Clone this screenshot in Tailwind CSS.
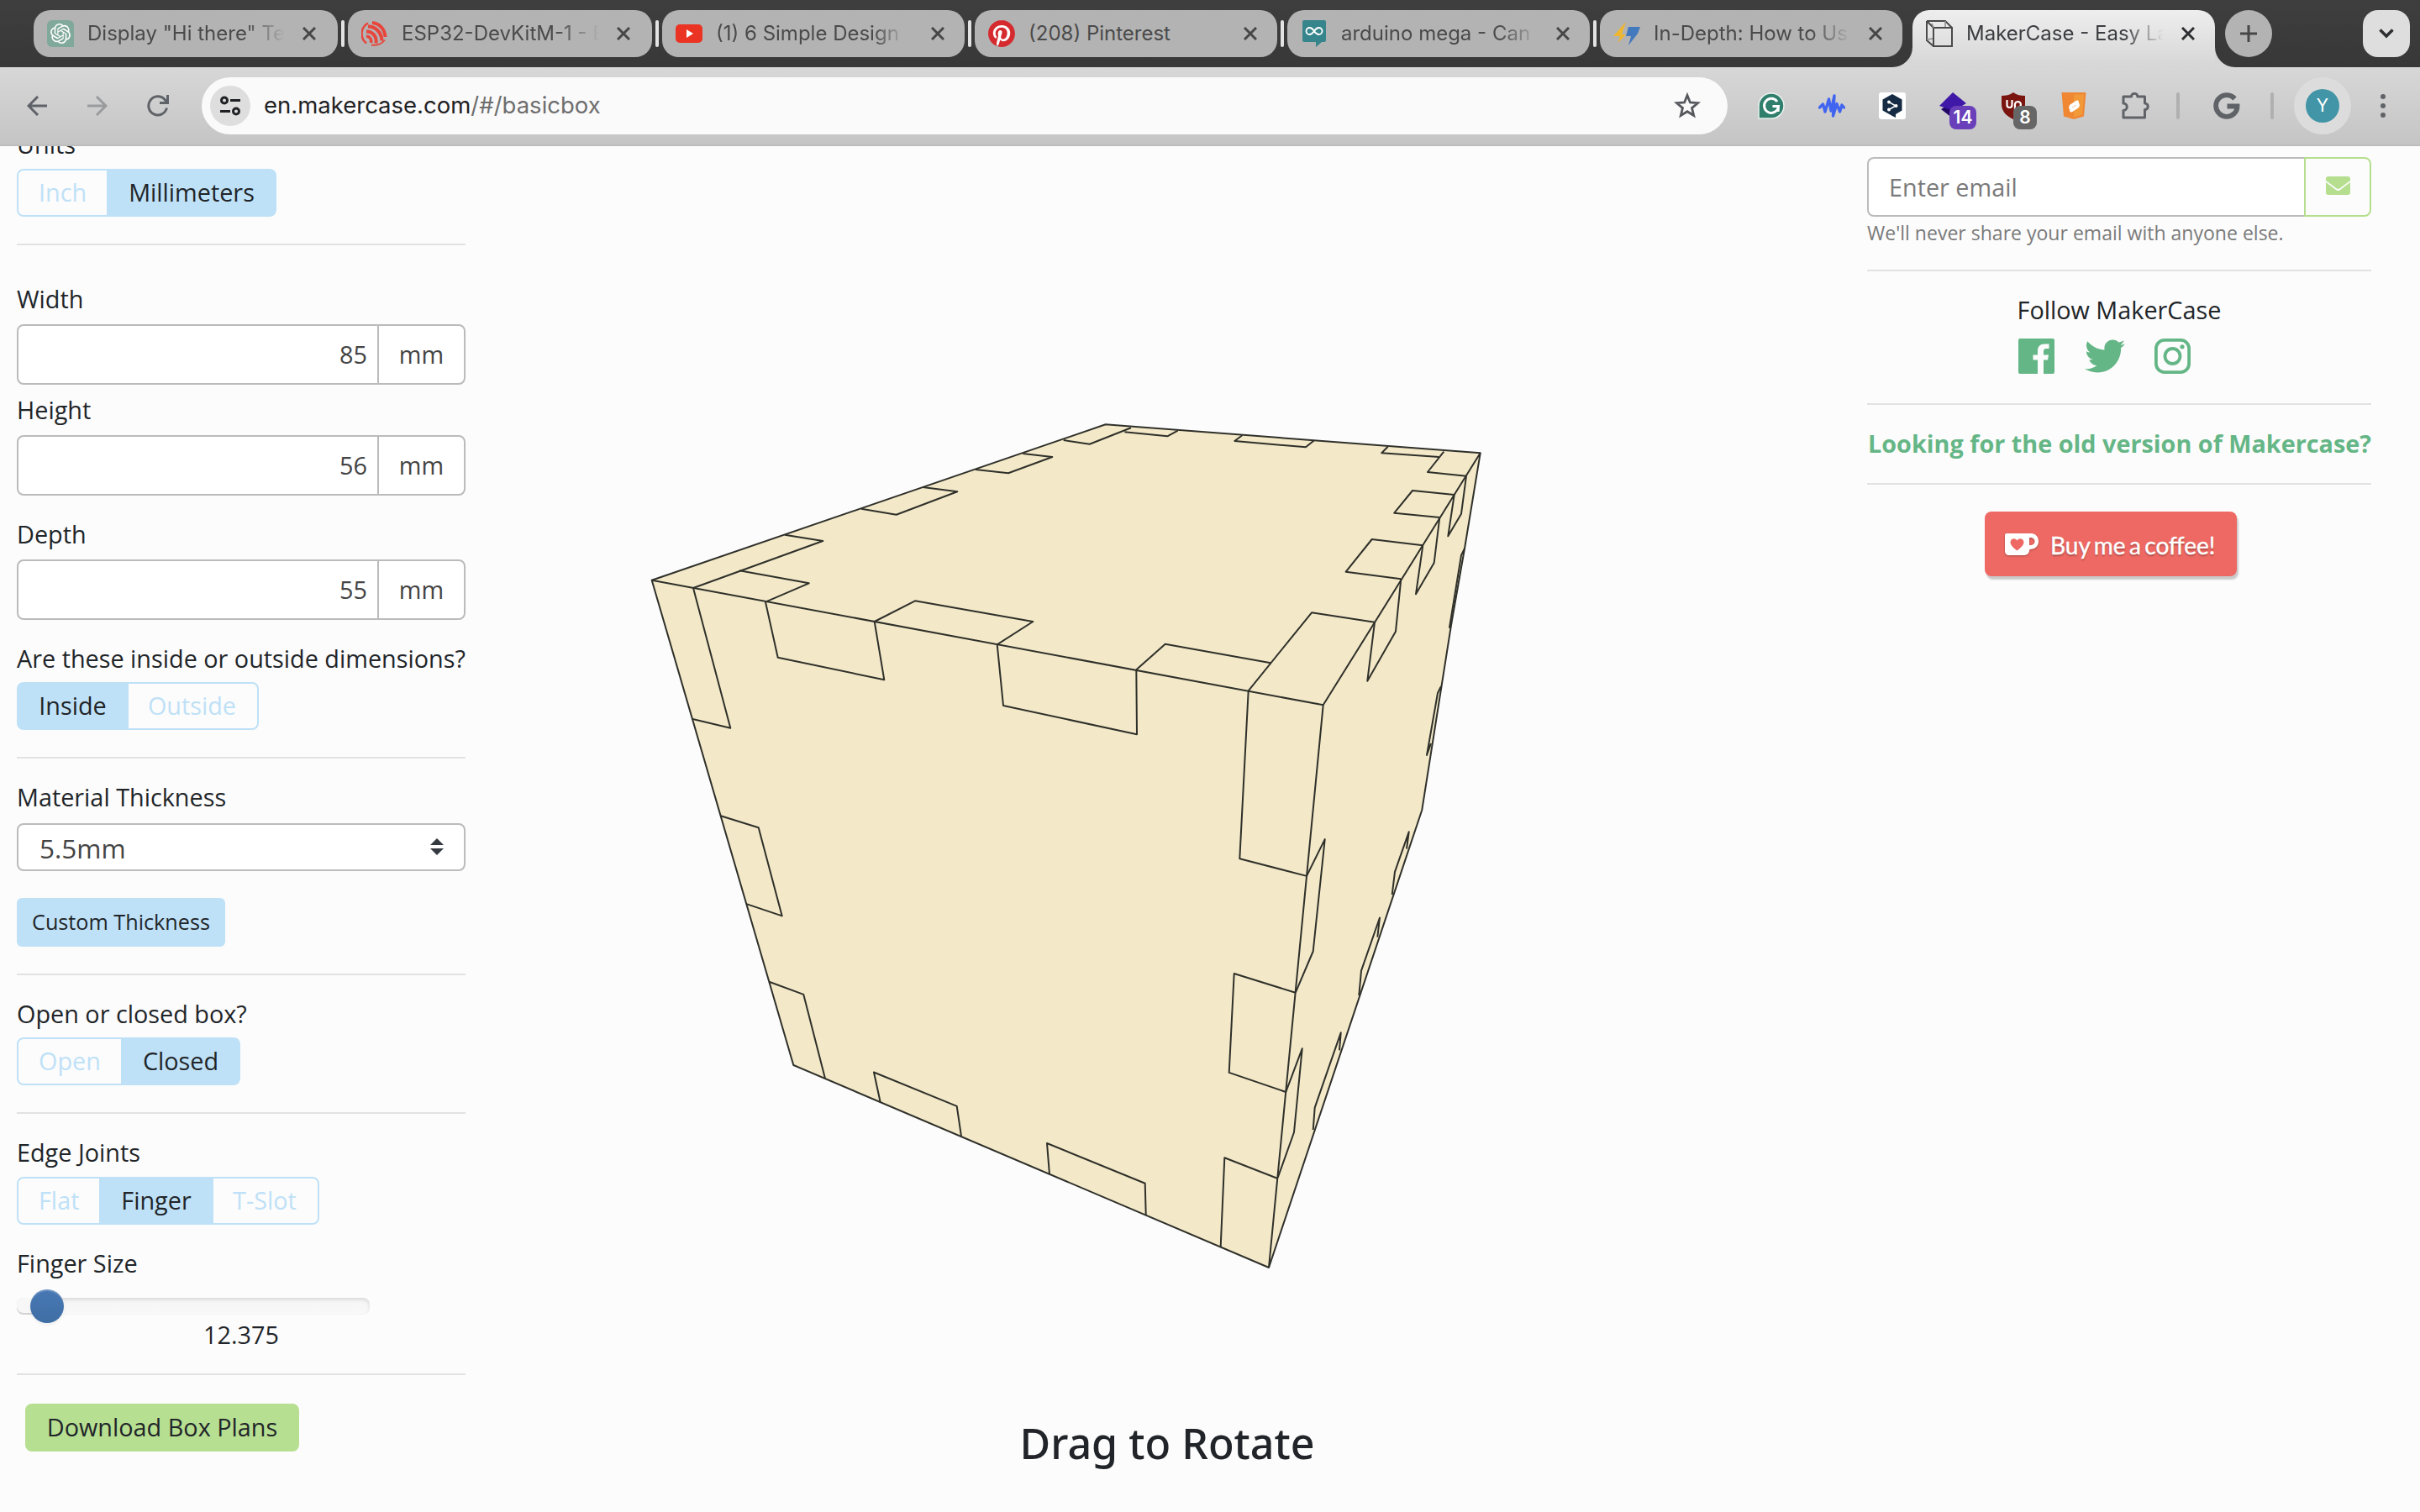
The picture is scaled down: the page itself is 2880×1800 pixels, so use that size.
<!DOCTYPE html>
<html lang="en">
<head>
<meta charset="utf-8">
<title>MakerCase - Easy Laser Cut Case Design</title>
<script src="https://cdn.jsdelivr.net/npm/@tailwindcss/browser@4"></script>
</head>
<body class="w-[2880px] h-[1800px] overflow-hidden bg-[#fcfcfc] flex flex-col font-['Open_Sans','Noto_Sans',sans-serif] text-[28.8px] text-[#212529]">

<!-- Tab strip -->
<header class="h-20 shrink-0 bg-linear-to-b from-[#3e3e3e] to-[#383838] pl-10 pr-3 pt-3 flex items-start font-['Inter',sans-serif] text-[24px] text-[#4a4a4a]">
  <div class="flex h-14 w-[362px] items-center rounded-[20px] bg-[#b3b3b3] pl-4">
    <svg class="size-8 shrink-0" viewBox="0 0 32 32"><path d="M6 0H26a6 6 0 0 1 6 6V32H6a6 6 0 0 1-6-6V6a6 6 0 0 1 6-6z" fill="#80a99c"/><path transform="translate(4 4)" fill="#fff" d="M22.2819 9.8211a5.9847 5.9847 0 0 0-.5157-4.9108 6.0462 6.0462 0 0 0-6.5098-2.9A6.0651 6.0651 0 0 0 4.9807 4.1818a5.9847 5.9847 0 0 0-3.9977 2.9 6.0462 6.0462 0 0 0 .7427 7.0966 5.98 5.98 0 0 0 .511 4.9107 6.051 6.051 0 0 0 6.5146 2.9001A5.9847 5.9847 0 0 0 13.2599 24a6.0557 6.0557 0 0 0 5.7718-4.2058 5.9894 5.9894 0 0 0 3.9977-2.9001 6.0557 6.0557 0 0 0-.7475-7.0729zm-9.022 12.6081a4.4755 4.4755 0 0 1-2.8764-1.0408l.1419-.0804 4.7783-2.7582a.7948.7948 0 0 0 .3927-.6813v-6.7369l2.02 1.1686a.071.071 0 0 1 .038.052v5.5826a4.504 4.504 0 0 1-4.4945 4.4944zm-9.6607-4.1254a4.4708 4.4708 0 0 1-.5346-3.0137l.142.0852 4.783 2.7582a.7712.7712 0 0 0 .7806 0l5.8428-3.3685v2.3324a.0804.0804 0 0 1-.0332.0615L9.74 19.9502a4.4992 4.4992 0 0 1-6.1408-1.6464zM2.3408 7.8956a4.485 4.485 0 0 1 2.3655-1.9728V11.6a.7664.7664 0 0 0 .3879.6765l5.8144 3.3543-2.0201 1.1685a.0757.0757 0 0 1-.071 0l-4.8303-2.7865A4.504 4.504 0 0 1 2.3408 7.872zm16.5963 3.8558L13.1038 8.364 15.1192 7.2a.0757.0757 0 0 1 .071 0l4.8303 2.7913a4.4944 4.4944 0 0 1-.6765 8.1042v-5.6772a.79.79 0 0 0-.407-.667zm2.0107-3.0231l-.142-.0852-4.7735-2.7818a.7759.7759 0 0 0-.7854 0L9.409 9.2297V6.8974a.0662.0662 0 0 1 .0284-.0615l4.8303-2.7866a4.4992 4.4992 0 0 1 6.6802 4.66zM8.3065 12.863l-2.02-1.1638a.0804.0804 0 0 1-.038-.0567V6.0742a4.4992 4.4992 0 0 1 7.3757-3.4537l-.142.0805L8.704 5.459a.7948.7948 0 0 0-.3927.6813zm1.0976-2.3654l2.602-1.4998 2.6069 1.4998v2.9994l-2.5974 1.4997-2.6067-1.4997Z"/></svg>
    <span class="ml-4 w-[240px] overflow-hidden whitespace-nowrap [mask-image:linear-gradient(to_right,black_78%,transparent_98%)]">Display "Hi there" Te</span>
    <svg class="ml-4 size-4 shrink-0" viewBox="0 0 16 16" stroke="#474747" stroke-width="3"><path d="M1 1L15 15M15 1L1 15"/></svg>
  </div>
  <div class="mx-1 mt-3 h-8 w-1 rounded-full bg-[#e3e3e3]"></div>
  <div class="flex h-14 w-[362px] items-center rounded-[20px] bg-[#b3b3b3] pl-4">
    <svg class="size-8 shrink-0" viewBox="0 0 32 32" fill="none" stroke="#e8453c"><path d="M8 3.500A14.500 14.500 0 0 0 6 27.500" stroke-width="2.500"/><path d="M13 3c9 1 15 8 15.500 17" stroke-width="4"/><path d="M8 7.500c9 0 16 7 16.500 17" stroke-width="4"/><path d="M6 13.500c8 0 12.500 6 11.500 14" stroke-width="4"/><path d="M6 19c4 .5 6.500 3.500 5.500 8" stroke-width="3.500"/><path d="M12 29.500c7 1 12-1 16-6" stroke-width="2"/></svg>
    <span class="ml-4 w-[240px] overflow-hidden whitespace-nowrap [mask-image:linear-gradient(to_right,black_78%,transparent_98%)]">ESP32-DevKitM-1 - E</span>
    <svg class="ml-4 size-4 shrink-0" viewBox="0 0 16 16" stroke="#474747" stroke-width="3"><path d="M1 1L15 15M15 1L1 15"/></svg>
  </div>
  <div class="mx-1 mt-3 h-8 w-1 rounded-full bg-[#e3e3e3]"></div>
  <div class="flex h-14 w-[360px] items-center rounded-[20px] bg-[#b3b3b3] pl-4">
    <svg class="size-8 shrink-0" viewBox="0 0 32 32"><rect y="5" width="32" height="22" rx="5" fill="#ea3323"/><path d="M13 11l8 5-8 5z" fill="#fff"/></svg>
    <span class="ml-4 w-[240px] overflow-hidden whitespace-nowrap [mask-image:linear-gradient(to_right,black_78%,transparent_94%)]">(1) 6 Simple Design T</span>
    <svg class="ml-4 size-4 shrink-0" viewBox="0 0 16 16" stroke="#474747" stroke-width="3"><path d="M1 1L15 15M15 1L1 15"/></svg>
  </div>
  <div class="mx-1 mt-3 h-8 w-1 rounded-full bg-[#e3e3e3]"></div>
  <div class="flex h-14 w-[360px] items-center rounded-[20px] bg-[#b3b3b3] pl-4">
    <svg class="size-8 shrink-0" viewBox="0 0 24 24"><circle cx="12" cy="12" r="11" fill="#fff"/><path fill="#d52b2f" d="M12.017 0C5.396 0 .029 5.367.029 11.987c0 5.079 3.158 9.417 7.618 11.162-.105-.949-.199-2.403.041-3.439.219-.937 1.406-5.957 1.406-5.957s-.359-.72-.359-1.781c0-1.663.967-2.911 2.168-2.911 1.024 0 1.518.769 1.518 1.688 0 1.029-.653 2.567-.992 3.992-.285 1.193.6 2.165 1.775 2.165 2.128 0 3.768-2.245 3.768-5.487 0-2.861-2.063-4.869-5.008-4.869-3.41 0-5.409 2.562-5.409 5.199 0 1.033.394 2.143.889 2.741.099.12.112.225.085.345-.09.375-.293 1.199-.334 1.363-.053.225-.172.271-.401.165-1.495-.69-2.433-2.878-2.433-4.646 0-3.776 2.748-7.252 7.92-7.252 4.158 0 7.392 2.967 7.392 6.923 0 4.135-2.607 7.462-6.233 7.462-1.214 0-2.354-.629-2.758-1.379l-.749 2.848c-.269 1.045-1.004 2.352-1.498 3.146 1.123.345 2.306.535 3.55.535 6.607 0 11.985-5.365 11.985-11.987C23.97 5.39 18.592.026 11.985.026L12.017 0z"/></svg>
    <span class="ml-4 w-[240px] overflow-hidden whitespace-nowrap">(208) Pinterest</span>
    <svg class="ml-4 size-4 shrink-0" viewBox="0 0 16 16" stroke="#474747" stroke-width="3"><path d="M1 1L15 15M15 1L1 15"/></svg>
  </div>
  <div class="mx-1 mt-3 h-8 w-1 rounded-full bg-[#e3e3e3]"></div>
  <div class="flex h-14 w-[360px] items-center rounded-[20px] bg-[#b3b3b3] pl-4">
    <svg class="size-8 shrink-0" viewBox="0 0 32 32"><path d="M4 0H28a2 2 0 0 1 2 2V24a2 2 0 0 1-2 2H25L18 32V26H4a2 2 0 0 1-2-2V2a2 2 0 0 1 2-2z" fill="#36858c"/><path d="M16 13c-2-3-3.500-4-5.500-4a4 4 0 0 0 0 8c2 0 3.500-1 5.500-4s3.500-4 5.500-4a4 4 0 0 1 0 8c-2 0-3.500-1-5.500-4z" fill="none" stroke="#fff" stroke-width="1.800"/></svg>
    <span class="ml-4 w-[240px] overflow-hidden whitespace-nowrap [mask-image:linear-gradient(to_right,black_78%,transparent_98%)]">arduino mega - Can</span>
    <svg class="ml-4 size-4 shrink-0" viewBox="0 0 16 16" stroke="#474747" stroke-width="3"><path d="M1 1L15 15M15 1L1 15"/></svg>
  </div>
  <div class="mx-1 mt-3 h-8 w-1 rounded-full bg-[#e3e3e3]"></div>
  <div class="flex h-14 w-[360px] items-center rounded-[20px] bg-[#b3b3b3] pl-4">
    <svg class="size-8 shrink-0" viewBox="0 0 32 32"><path d="M15 2L0 19H8L5.500 27 15 17H10z" fill="#efb62f"/><path d="M18 8H32L29 16 18 30 21 19H15z" fill="#4379bd"/></svg>
    <span class="ml-4 w-[240px] overflow-hidden whitespace-nowrap [mask-image:linear-gradient(to_right,black_78%,transparent_98%)]">In-Depth: How to Us</span>
    <svg class="ml-4 size-4 shrink-0" viewBox="0 0 16 16" stroke="#474747" stroke-width="3"><path d="M1 1L15 15M15 1L1 15"/></svg>
  </div>
  <!-- Active tab -->
  <svg class="-ml-3 mt-11 h-6 w-6 shrink-0" viewBox="0 0 24 24"><path d="M24 0A24 24 0 0 1 0 24H24z" fill="#d7d7d7"/></svg>
  <div class="flex h-[68px] w-[360px] items-center rounded-t-[20px] bg-linear-to-b from-[#eeeeee] to-[#d6d6d6] pb-3 pl-4 text-[#3c3d40]">
    <svg class="size-8 shrink-0" viewBox="0 0 32 32" fill="none" stroke="#4a4a4a" stroke-width="2"><path d="M9 9H31V31H9zM1 1H23L31 9M1 1V24L9 31M1 1L9 9"/><path d="M9 9L7 4M23 1V8M1 23L8 22" stroke="#8a8a8a" stroke-width="1.500"/></svg>
    <span class="ml-4 w-[240px] overflow-hidden whitespace-nowrap [mask-image:linear-gradient(to_right,black_78%,transparent_98%)]">MakerCase - Easy La</span>
    <svg class="ml-4 size-4 shrink-0" viewBox="0 0 16 16" stroke="#2e2f32" stroke-width="3"><path d="M1 1L15 15M15 1L1 15"/></svg>
  </div>
  <svg class="mt-11 h-6 w-6 shrink-0" viewBox="0 0 24 24"><path d="M0 0A24 24 0 0 0 24 24H0z" fill="#d7d7d7"/></svg>
  <div class="-ml-3 flex size-14 shrink-0 items-center justify-center rounded-full bg-[#b3b3b3]">
    <svg class="size-5" viewBox="0 0 20 20" stroke="#474747" stroke-width="3"><path d="M10 0V20M0 10H20"/></svg>
  </div>
  <div class="ml-auto flex size-14 shrink-0 items-center justify-center rounded-[18px] bg-[#dedede]">
    <svg class="h-3 w-[18px]" viewBox="0 0 18 12" fill="none" stroke="#2e2f32" stroke-width="3.500"><path d="M1.500 1.500L9 9L16.500 1.500"/></svg>
  </div>
</header>

<!-- Toolbar -->
<nav class="flex h-[94px] shrink-0 items-center border-b-2 border-[#bdbdbd] bg-linear-to-b from-[#d7d7d7] to-[#c5c5c5] pl-8 pr-10 font-['Inter',sans-serif]">
  <svg class="h-6 w-6" viewBox="0 0 24 24" fill="none" stroke="#5f6368" stroke-width="3"><path d="M24 12H2M13 1L2 12L13 23"/></svg>
  <svg class="ml-12 h-6 w-6" viewBox="0 0 24 24" fill="none" stroke="#999b9d" stroke-width="3"><path d="M0 12H22M11 1L22 12L11 23"/></svg>
  <svg class="ml-[47px] size-[26px]" viewBox="0 0 26 26" fill="none" stroke="#5f6368" stroke-width="3"><path d="M23.500 15.500A11 11 0 1 1 21 5.500L24 9M24.500 0V9.500H15"/></svg>
  <div class="ml-[39px] flex h-[68px] w-[1816px] items-center rounded-full bg-[#fafafa] pl-[10px] pr-8">
    <div class="flex size-12 items-center justify-center rounded-full bg-[#dedede]">
      <svg class="size-6" viewBox="0 0 24 24" fill="none" stroke="#1f2124" stroke-width="3"><circle cx="5" cy="5.500" r="3.500"/><path d="M12 5.500H24M0 18.500H12"/><circle cx="19" cy="18.500" r="3.500"/></svg>
    </div>
    <span class="ml-4 text-[27.5px] text-[#1f2124]">en.makercase.com<span class="text-[#6e6e6e]">/#/basicbox</span></span>
    <svg class="ml-auto size-8" viewBox="0 0 32 32" fill="none" stroke="#55585c" stroke-width="2.800"><path d="M16 3.500L19.400 12L28.500 12.700L21.500 18.600L23.700 27.500L16 22.700L8.300 27.500L10.500 18.600L3.500 12.700L12.600 12z"/></svg>
  </div>
  <!-- Extensions -->
  <svg class="ml-9 size-8" viewBox="0 0 32 32"><path d="M16 1A15 15 0 1 1 16 31H1V16A15 15 0 0 1 16 1z" fill="#2f7f6c" stroke="#e8efec" stroke-width="1.500"/><path d="M23 11A8.500 8.500 0 1 0 24.500 16.500H17.500M24.500 16.500L24 23" fill="none" stroke="#fff" stroke-width="3"/></svg>
  <svg class="ml-10 size-8" viewBox="0 0 32 32" fill="none" stroke="#4265f0" stroke-width="3.400" stroke-linejoin="round" stroke-linecap="round"><path d="M1.500 18L5.500 14L8 23L12.500 8L15 22L19 4L17.500 28L22 13.500L25.500 23L28 15L30.500 18"/></svg>
  <svg class="ml-10 size-8" viewBox="0 0 32 32"><rect width="32" height="32" rx="3" fill="#fff"/><path d="M16 2L27.500 8.500V21.500L20 26V30L16 28L4.500 21.500V8.500z" fill="#152b43"/><path d="M12 11.500L20 16L12 20.500" fill="none" stroke="#fff" stroke-width="1.500"/><g fill="#fff"><circle cx="12" cy="11.500" r="2"/><circle cx="20.500" cy="16" r="2"/><circle cx="12" cy="20.500" r="2"/></g></svg>
  <div class="relative ml-10 size-8">
    <svg class="size-8" viewBox="0 0 32 32"><path d="M2 20L12 14L28 22L16 31z" fill="#230768"/><path d="M16 0L32 13L17 22L0 16z" fill="#3f18a8"/></svg>
    <span class="absolute left-3 top-4 flex h-7 w-8 items-center justify-center rounded-lg bg-[#6a40ba] text-[21px] font-semibold text-white">14</span>
  </div>
  <div class="relative ml-10 size-8">
    <svg class="size-8" viewBox="0 0 32 32"><path d="M16 0C20 3 25 4 30 4V14C30 23 24 28 16 32C8 28 2 23 2 14V4C7 4 12 3 16 0z" fill="#79140f"/><path d="M8.500 9V15Q8.500 18 11.500 18T14.500 15V9M18 24V14A3.500 3.500 0 1 1 21 18" fill="none" stroke="#fff" stroke-width="2.200"/></svg>
    <span class="absolute left-4 top-4 flex size-7 items-center justify-center rounded-lg bg-[#666] text-[21px] font-semibold text-white">8</span>
  </div>
  <svg class="ml-10 size-8" viewBox="0 0 32 32"><path d="M1.500 0H30.500L28 28.500L16 32L4 28.500z" fill="#ef8733"/><path d="M16 2.500H28L26 26.500L16 29.500z" fill="#f29a3a"/><g fill="none" stroke="#fff" stroke-width="4" stroke-linecap="round"><path d="M20 11.500L12.500 16.500A2.500 2.500 0 0 0 12.500 19"/><path d="M20.500 14A2.500 2.500 0 0 1 20 17L13 21.500"/></g></svg>
  <svg class="ml-10 h-8 w-[34px]" viewBox="0 0 34 32" fill="none" stroke="#5f6368" stroke-width="3" stroke-linejoin="round"><path d="M3 5H12.500A3.700 3.700 0 0 1 19.900 5H28.500V13A3.700 3.700 0 0 1 28.500 20.500V30H3V21.500A4.200 4.200 0 0 0 3 13z"/></svg>
  <div class="ml-8 h-8 w-1 rounded-full bg-[#b0b0b0]"></div>
  <svg class="ml-10 size-8" viewBox="0 0 32 32" fill="none" stroke="#5f6368" stroke-width="5.800"><path d="M25.500 7.500A12.800 12.800 0 1 0 24.500 25.500Q28.500 22 28.500 16.500H16.500"/></svg>
  <div class="ml-9 h-8 w-1 rounded-full bg-[#b0b0b0]"></div>
  <div class="ml-6 flex size-[68px] items-center justify-center rounded-full bg-[#dcdcdc]">
    <span class="flex size-10 items-center justify-center rounded-full bg-[#4295a6] text-[21px] text-white">Y</span>
  </div>
  <svg class="ml-auto h-7 w-2" viewBox="0 0 8 28" fill="#5f6368"><circle cx="4" cy="3" r="3"/><circle cx="4" cy="14" r="3"/><circle cx="4" cy="25" r="3"/></svg>
</nav>

<main class="flex min-h-0 flex-1 overflow-hidden">
  <!-- Box parameters -->
  <aside class="flex w-[574px] shrink-0 flex-col items-start pl-5 pr-5 whitespace-nowrap">
    <label class="-mt-6 h-[43px] leading-[43px]">Units</label>
    <div class="mt-2 flex h-[57px] rounded-lg border-2 border-[#bfe1f7] leading-[52px]">
      <span class="w-[105px] pl-6 text-[#bfe1f7]">Inch</span>
      <span class="w-[200px] bg-[#bfe1f7] pl-[2px] text-center">Millimeters</span>
    </div>
    <hr class="mt-8 w-full border-t-2 border-[#e2e2e2]">

    <label class="mt-[42px] h-[43px] leading-[43px]">Width</label>
    <div class="mt-[9px] flex h-[72px] w-full rounded-lg border-2 border-[#bbb] bg-white leading-[68px] text-[#444]">
      <span class="w-[429px] border-r-2 border-[#bbb] pr-3 text-right">85</span>
      <span class="flex-1 text-center">mm</span>
    </div>
    <label class="mt-2 h-[43px] leading-[43px]">Height</label>
    <div class="mt-[9px] flex h-[72px] w-full rounded-lg border-2 border-[#bbb] bg-white leading-[68px] text-[#444]">
      <span class="w-[429px] border-r-2 border-[#bbb] pr-3 text-right">56</span>
      <span class="flex-1 text-center">mm</span>
    </div>
    <label class="mt-6 h-[43px] leading-[43px]">Depth</label>
    <div class="mt-[9px] flex h-[72px] w-full rounded-lg border-2 border-[#bbb] bg-white leading-[68px] text-[#444]">
      <span class="w-[429px] border-r-2 border-[#bbb] pr-3 text-right">55</span>
      <span class="flex-1 text-center">mm</span>
    </div>

    <label class="mt-6 h-[43px] leading-[43px]">Are these inside or outside dimensions?</label>
    <div class="mt-[7px] flex h-[57px] rounded-lg border-2 border-[#bfe1f7] leading-[52px]">
      <span class="w-[131px] bg-[#bfe1f7] pr-[2px] text-center">Inside</span>
      <span class="w-[153px] pr-[2px] text-center text-[#bfe1f7]">Outside</span>
    </div>
    <hr class="mt-8 w-full border-t-2 border-[#e2e2e2]">

    <label class="mt-6 h-[43px] leading-[43px]">Material Thickness</label>
    <div class="mt-[10px] flex h-[57px] w-full items-center justify-between rounded-lg border-2 border-[#bbb] bg-white pl-[25px] pr-6 text-[31.5px] text-[#444]">
      <span class="pt-[2px] leading-none">5.5mm</span>
      <svg class="mb-[2px] h-5 w-4" viewBox="0 0 16 20" fill="#343a40"><path d="M8 0L16 8H0zM8 20L0 12H16z"/></svg>
    </div>
    <div class="mt-8 h-[58px] w-[248px] rounded-md bg-[#bfe1f7] text-center text-[25.2px] leading-[57px]">Custom Thickness</div>
    <hr class="mt-8 w-full border-t-2 border-[#e2e2e2]">

    <label class="mt-6 h-[43px] leading-[43px]">Open or closed box?</label>
    <div class="mt-[7px] flex h-[57px] rounded-lg border-2 border-[#bfe1f7] leading-[52px]">
      <span class="w-[122px] pl-6 text-[#bfe1f7]">Open</span>
      <span class="w-[140px] bg-[#bfe1f7] pl-[2px] text-center">Closed</span>
    </div>
    <hr class="mt-8 w-full border-t-2 border-[#e2e2e2]">

    <label class="mt-6 h-[43px] leading-[43px]">Edge Joints</label>
    <div class="mt-2 flex h-[57px] rounded-lg border-2 border-[#bfe1f7] leading-[52px]">
      <span class="w-[96px] pl-6 text-[#bfe1f7]">Flat</span>
      <span class="w-[136px] bg-[#bfe1f7] text-center">Finger</span>
      <span class="w-[124px] pr-[2px] text-center text-[#bfe1f7]">T-Slot</span>
    </div>

    <label class="mt-6 h-[43px] leading-[43px]">Finger Size</label>
    <div class="relative mt-5 h-5 w-[420px] rounded-lg bg-linear-to-b from-[#f4f4f4] to-[#f9f9f9] shadow-[inset_0_2px_4px_rgba(0,0,0,0.12)]">
      <div class="h-5 w-9 rounded-l-lg bg-[#f7f7f7] shadow-[inset_0_-2px_0_rgba(0,0,0,0.15)]"></div>
      <div class="absolute -top-[10px] left-4 size-10 rounded-full bg-linear-to-b from-[#4878b4] to-[#3f6ea4] shadow-[inset_0_2px_0_rgba(255,255,255,0.2),0_2px_4px_rgba(0,0,0,0.06)]"></div>
    </div>
    <div class="mt-[2px] h-[43px] w-full text-center leading-[43px]">12.375</div>
    <hr class="mt-[25px] w-full border-t-2 border-[#e2e2e2]">
    <div class="ml-[10px] mt-[34px] h-[57px] w-[326px] rounded-lg bg-[#b7df92] text-center leading-[56px]">Download Box Plans</div>
  </aside>

  <!-- 3D preview -->
  <section class="flex w-[1630px] shrink-0 flex-col items-center">
    <svg class="h-[1500px] w-[1630px] shrink-0" viewBox="574 174 1630 1500" fill="none" stroke="#2f302a" stroke-width="2" stroke-linejoin="round">
      <path d="M775.700 690.700L1315.700 505.300L1761.700 539.300L1743 653L1727.500 741L1692.300 964.200L1510 1509L944.300 1268z" fill="#f3e9c9"/>
      <path d="M775.700 690.700L1574.700 839.300L1761.700 539.300M1574.700 839.300L1510 1509"/>
      <!-- top panel, left edge -->
      <path d="M934 636.700L979.300 644L825 700M1098.300 580L1139.300 585.300L1066.700 612.700L1025 605.700M1217.300 540L1252.300 544L1200 563.300L1161 559M1265.700 524L1296.700 528.700L1346 509.300"/>
      <!-- top panel, back edge -->
      <path d="M1338.300 514.300L1389.300 519.300L1401.700 512.700M1478.300 518.300L1469.300 525L1554 532.300L1564 524.300M1651.700 531.700L1644.300 539.300L1712.300 544"/>
      <!-- top panel, right edge -->
      <path d="M1718.300 537.700L1699 562L1745 566.700M1730.700 589L1681 584L1659.300 610.700L1713.300 616M1693.300 649.300L1632.700 642L1601.700 680.700L1667.300 689.300M1636 740.700L1561 729.300L1485.700 822.300"/>
      <!-- top panel, front edge -->
      <path d="M880 679.300L962.700 694.300L911 716.700M1040.700 740L1089 715.300L1229.300 740L1186.700 767.300M1512.300 789.300L1386.700 766.700L1352.300 797.300"/>
      <!-- front panel -->
      <path d="M825 700L869.300 866.700L823.300 855.700M911 716.700L925.700 782.700L1052.300 809.300L1040.700 740M1186.700 767.300L1194 840L1353 874.300L1352.300 797.300M857.700 971.300L902.700 985.200L930.700 1090.400L888.300 1076.100M915.300 1168.700L956.300 1183.900L982 1284M1047.700 1312.200L1040 1276.500L1138.700 1316.900L1144 1352.600M1249 1398.300L1246 1361L1362.700 1408.700L1363.700 1446M1452.700 1484L1457.300 1378.300L1520 1402.700M1485.700 822.300L1475.300 1022.300L1555 1042.900M1541.700 1181.800L1468.700 1159L1462.700 1276.900L1530.300 1300"/>
      <!-- right panel -->
      <path d="M1745 566.700L1739 611.700L1723.300 638.300L1730.700 589M1713.300 616L1706.700 670L1685 707.300L1693.300 649.300M1667.300 689.300L1661 751.700L1627.300 810.700L1636 740.700M1555 1042.900L1576.700 999.100L1562.700 1132.500L1541.700 1181.800M1530.300 1300L1549.700 1248.300L1540 1348L1520.700 1401.900"/>
      <path d="M1743 653L1739 661L1725 747L1727.500 741M1715 817L1711 825L1698 899L1703 885M1674 1010.500L1676.700 990.300L1660 1037.800L1656.700 1065.200M1639.300 1115.700L1642 1092.500L1620 1155.700L1617.300 1185.100M1594 1250.400L1595.700 1229.300L1564.700 1318.600L1562.700 1345"/>
    </svg>
    <h3 class="mt-[9px] font-['Noto_Sans',sans-serif] text-[50.2px] font-medium leading-[70px]">Drag to Rotate</h3>
  </section>

  <!-- Newsletter and social links -->
  <aside class="flex flex-1 flex-col items-start pl-[18px] pr-[58px] whitespace-nowrap">
    <div class="mt-[13px] flex h-[71px] w-full">
      <div class="flex-1 rounded-l-lg border-2 border-r-0 border-[#bbb] bg-white pl-6 leading-[67px] text-[#7a7a7a]">Enter email</div>
      <div class="flex w-20 items-center justify-center rounded-r-lg border-2 border-[#b5df8f] pb-[3px]">
        <svg class="h-[22px] w-[29px]" viewBox="0 0 29 22"><rect width="29" height="22" rx="3" fill="#b5df8f"/><path d="M0 6L12 15Q14.500 17 17 15L29 6" fill="none" stroke="#fcfcfc" stroke-width="1.700"/></svg>
      </div>
    </div>
    <p class="mt-[2px] h-[35px] text-[23.04px] leading-[35px] text-[#7a7a7a]">We'll never share your email with anyone else.</p>
    <hr class="mt-[26px] w-full border-t-2 border-[#e2e2e2]">
    <div class="mx-auto mt-6 w-[243px]">
      <p class="h-[43px] leading-[43px]">Follow MakerCase</p>
      <div class="mt-[13px] flex h-[42px] items-center pl-[1px] text-[#65b686]">
        <svg class="h-[42px] w-[43px]" viewBox="0 0 43 42"><path fill="currentColor" d="M2 0H41a2 2 0 0 1 2 2V40a2 2 0 0 1-2 2H30V25.500H35L36 19.500H30V15.500C30 13 31 12 33.500 12H36.500V6.500H31C26 6.500 23 9.500 23 14.500V19.500H17.500V25.500H23V42H2a2 2 0 0 1-2-2V2a2 2 0 0 1 2-2z"/></svg>
        <svg class="ml-9 size-12" viewBox="0 0 512 512"><path fill="currentColor" d="M459.370 151.716c.325 4.548.325 9.097.325 13.645 0 138.720-105.583 298.558-298.558 298.558-59.452 0-114.680-17.219-161.137-47.106 8.447.974 16.568 1.299 25.340 1.299 49.055 0 94.213-16.568 130.274-44.832-46.132-.975-84.792-31.188-98.112-72.772 6.498.974 12.995 1.624 19.818 1.624 9.421 0 18.843-1.300 27.614-3.573-48.081-9.747-84.143-51.980-84.143-102.985v-1.299c13.969 7.797 30.214 12.670 47.431 13.319-28.264-18.843-46.781-51.005-46.781-87.391 0-19.492 5.197-37.360 14.294-52.954 51.655 63.675 129.300 105.258 216.365 109.807-1.624-7.797-2.599-15.918-2.599-24.040 0-57.828 46.782-104.934 104.934-104.934 30.213 0 57.502 12.670 76.670 33.137 23.715-4.548 46.456-13.320 66.599-25.340-7.798 24.366-24.366 44.833-46.132 57.827 21.117-2.273 41.584-8.122 60.426-16.243-14.292 20.791-32.161 39.308-52.628 54.253z"/></svg>
        <svg class="ml-[35px] h-[42px] w-[43px]" viewBox="0 0 43 42" fill="none" stroke="currentColor" stroke-width="3.800"><rect x="1.900" y="1.900" width="39.200" height="38.200" rx="10"/><circle cx="21.500" cy="21" r="9"/><circle cx="33" cy="9.800" r="2.600" fill="currentColor" stroke="none"/></svg>
      </div>
    </div>
    <hr class="mt-[35px] w-full border-t-2 border-[#e2e2e2]">
    <p class="mt-6 h-[43px] pl-[1px] font-bold leading-[43px] text-[#65b686]">Looking for the old version of Makercase?</p>
    <hr class="mt-[26px] w-full border-t-2 border-[#e2e2e2]">
    <div class="ml-[140px] mt-8 flex h-[77px] w-[300px] items-center rounded-lg bg-[#ee6964] pl-6 font-['Lato',sans-serif] text-[28px] text-white shadow-[2px_4px_2px_rgba(0,0,0,0.2)]">
      <svg class="h-[26px] w-10 drop-shadow-[0_1px_1px_rgba(0,0,0,0.3)]" viewBox="0 0 40 26"><path fill="#fff" fill-rule="evenodd" d="M2 0H31C37 0 40 4.500 40 9.500C40 15 36 19 29.500 19C28.500 24 27 26 22 26H5C2 26 0 24 0 21V2A2 2 0 0 1 2 0zM29 5V14C33 14.500 35.500 12.500 35.500 9.500S33 4.500 29 5z"/><path fill="#ee6964" d="M14.500 20.500C10 17 6.500 14 6.500 10.500C6.500 6 12 4.500 14.500 8.500C17 4.500 22.500 6 22.500 10.500C22.500 14 19 17 14.500 20.500z"/></svg>
      <span class="ml-[14px] pt-[3px] [-webkit-text-stroke:0.4px_white] [text-shadow:0_2px_2px_rgba(0,0,0,0.3)] [word-spacing:-2.7px]">Buy me a coffee!</span>
    </div>
  </aside>
</main>
</body>
</html>
